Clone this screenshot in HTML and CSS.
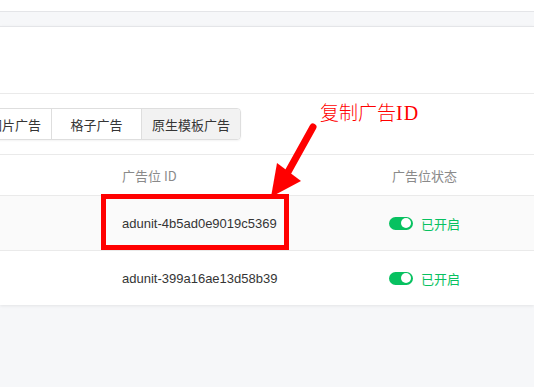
FILE: index.html
```html
<!DOCTYPE html>
<html>
<head>
<meta charset="utf-8">
<link rel="stylesheet" href="styles.css">
</head>
<body>
<div class="page">
  <div class="topbar"></div>
  <div class="card">
    <div class="card-head"></div>
    <div class="tabs-wrap">
      <div class="tabs">
        <div class="tab first">图片广告</div>
        <div class="tab">格子广告</div>
        <div class="tab active">原生模板广告</div>
      </div>
    </div>
    <div class="row head">
      <div></div>
      <div>广告位 ID</div>
      <div>广告位状态</div>
    </div>
    <div class="row body alt">
      <div></div>
      <div class="uid">adunit-4b5ad0e9019c5369</div>
      <div class="status"><span class="toggle"><span class="knob"></span></span><span class="on">已开启</span></div>
    </div>
    <div class="row body">
      <div></div>
      <div class="uid">adunit-399a16ae13d58b39</div>
      <div class="status"><span class="toggle"><span class="knob"></span></span><span class="on">已开启</span></div>
    </div>
  </div>
  <div class="redbox"></div>
  <div class="note">复制广告<span class="latin">ID</span></div>
  <svg class="arrow" width="534" height="387" viewBox="0 0 534 387">
    <line x1="313" y1="127" x2="288" y2="172" stroke="#ff0000" stroke-width="7" stroke-linecap="round"/>
    <polygon points="277,163 301,181 271,197" fill="#ff0000"/>
  </svg>
</div>
</body>
</html>
```

FILE: styles.css
```css
html, body {
  margin: 0;
  padding: 0;
}
body {
  background: #f6f7f9;
  font-family: "Noto Sans", "Noto Sans CJK SC", sans-serif;
  font-size: 13px;
  color: #353535;
  width: 534px;
  height: 387px;
  overflow: hidden;
}
.page {
  position: relative;
  width: 534px;
  height: 387px;
}
.topbar {
  height: 11px;
  background: #fff;
  border-bottom: 1px solid #e4e5e8;
}
.card {
  margin-top: 14px;
  background: #fff;
  border-top: 1px solid #e4e5e8;
  box-shadow: 0 1px 3px rgba(0,0,0,0.08);
}
.card-head {
  height: 66px;
  border-bottom: 1px solid #eaeaea;
}
.tabs-wrap {
  height: 61px;
  padding-top: 14px;
  box-sizing: border-box;
  border-bottom: 1px solid #eaeaea;
}
.tabs {
  display: flex;
  height: 32px;
  margin-left: -22px;
  width: max-content;
  border: 1px solid #dedede;
  border-radius: 4px;
  box-sizing: border-box;
  box-shadow: 0 1px 2px rgba(0,0,0,0.05);
  overflow: hidden;
  font-family: "Noto Sans CJK SC", sans-serif;
}
.tab {
  min-width: 90px;
  padding: 0 10px;
  box-sizing: border-box;
  display: flex;
  align-items: center;
  justify-content: center;
  color: #353535;
  border-left: 1px solid #dedede;
  line-height: 1;
}
.tab.first {
  border-left: none;
  min-width: 0;
}
.tab.active {
  background: #f2f2f2;
}
.row {
  display: grid;
  grid-template-columns: 122px 270px 1fr;
  align-items: center;
  border-bottom: 1px solid #eaeaea;
}
.row.head {
  height: 40px;
  color: #8a8a8a;
  font-family: "Noto Sans CJK SC", sans-serif;
}
.row.body {
  height: 54px;
}
.row.body:last-child {
  border-bottom: none;
}
.row.alt {
  background: #fafafa;
}
.uid {
  color: #353535;
  font-family: "Liberation Sans", sans-serif;
}
.status {
  display: flex;
  align-items: center;
  gap: 8px;
  margin-left: -3px;
}
.toggle {
  width: 24px;
  height: 13px;
  border-radius: 7px;
  background: #07c160;
  position: relative;
  display: inline-block;
}
.knob {
  position: absolute;
  right: 2px;
  top: 1.5px;
  width: 10px;
  height: 10px;
  border-radius: 50%;
  background: #fff;
}
.on {
  color: #07c160;
  font-family: "Noto Sans CJK SC", sans-serif;
}
.redbox {
  position: absolute;
  left: 101px;
  top: 194px;
  width: 188px;
  height: 56px;
  box-sizing: border-box;
  border: 5px solid #ff0000;
}
.note {
  position: absolute;
  left: 320px;
  top: 99px;
  color: #ff0000;
  font-size: 19px;
  font-family: "Noto Sans CJK SC", serif;
  font-weight: 300;
  line-height: 26px;
}
.note .latin {
  font-family: "Liberation Serif", serif;
  font-size: 20px;
  letter-spacing: 1px;
}
.arrow {
  position: absolute;
  left: 0;
  top: 0;
  pointer-events: none;
}
```
